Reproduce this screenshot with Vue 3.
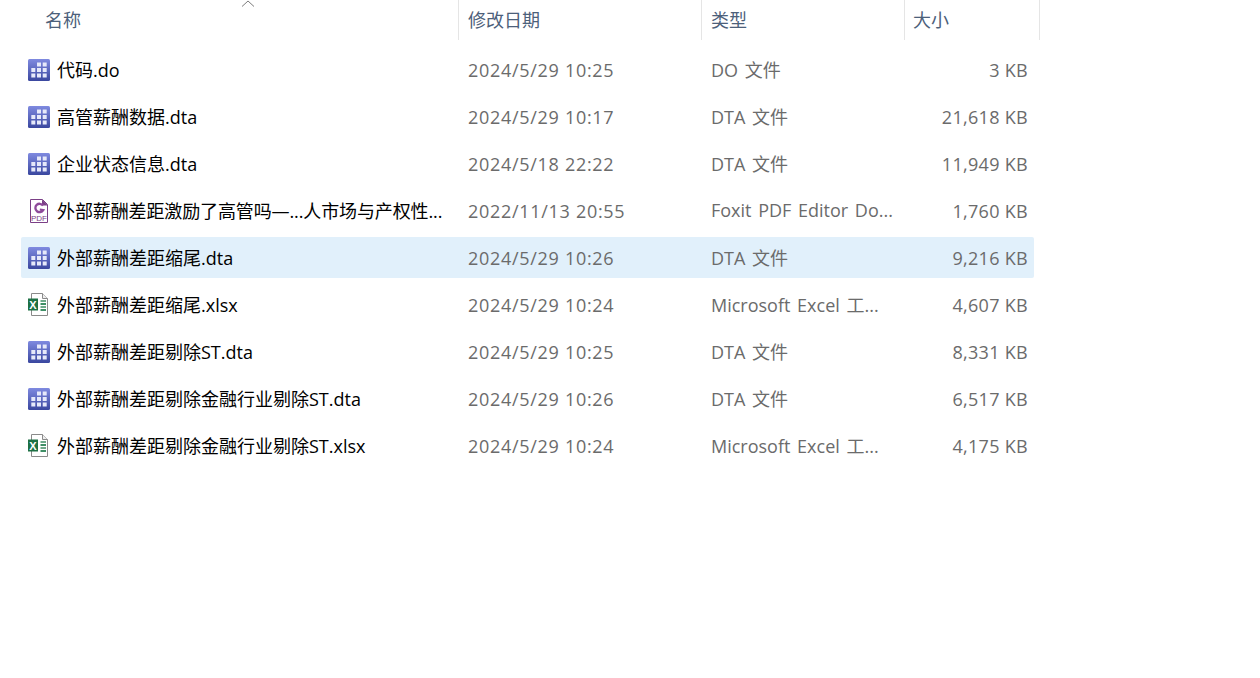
<template>
  <div class="explorer">
    <div class="header">
      <div class="col-head name-head">
        名称
        <svg class="sort" width="14" height="8" viewBox="0 0 14 8"><path d="M1 6.5 7 1l6 5.5" fill="none" stroke="#7d7d7d" stroke-width="1"/></svg>
      </div>
      <div class="col-head date-col">修改日期</div>
      <div class="col-head type-col">类型</div>
      <div class="col-head size-col">大小</div>
    </div>
    <div class="rows">
      <div v-for="f in files" :key="f.name" class="row" :class="{ selected: f.selected }">
        <div class="name-cell">
          <svg v-if="f.icon === 'stata'" class="icon" width="22" height="22" viewBox="0 0 22 22">
            <defs>
              <linearGradient id="stataBg" x1="0" y1="0" x2="0" y2="1">
                <stop offset="0" stop-color="#7f8ae0"/>
                <stop offset="1" stop-color="#3a479f"/>
              </linearGradient>
            </defs>
            <rect width="22" height="22" rx="1.5" fill="url(#stataBg)"/>
            <g fill="#e6e9fa">
              <rect x="9" y="3.5" width="4" height="4"/>
              <rect x="14.7" y="3.5" width="4" height="4"/>
              <rect x="3.3" y="9" width="4" height="4"/>
              <rect x="9" y="9" width="4" height="4"/>
              <rect x="14.7" y="9" width="4" height="4"/>
              <rect x="3.3" y="14.5" width="4" height="4"/>
              <rect x="9" y="14.5" width="4" height="4"/>
              <rect x="14.7" y="14.5" width="4" height="4"/>
            </g>
          </svg>
          <svg v-else-if="f.icon === 'pdf'" class="icon" width="22" height="24" viewBox="0 0 22 24">
            <path d="M2.5.5h12l5 5v18h-17z" fill="#fff" stroke="#7b3f86"/>
            <path d="M14 .5v6h6z" fill="#7b3f86"/>
            <path d="M15 6.5a4.2 4.2 0 1 0 .2 4.6l-3.4-.4" fill="none" stroke="#8e4a9a" stroke-width="2.3"/>
            <text x="11" y="21.5" text-anchor="middle" class="pdf-text">PDF</text>
          </svg>
          <svg v-else class="icon" width="22" height="24" viewBox="0 0 22 24">
            <path d="M3.5.5h11l5 5v17h-16z" fill="#fff" stroke="#8a8a8a"/>
            <path d="M14.5.5v5h5" fill="#eee" stroke="#8a8a8a"/>
            <rect x="12.5" y="7" width="5.5" height="2" fill="#6fa98a"/>
            <rect x="12.5" y="10" width="5.5" height="2" fill="#3f8f66"/>
            <rect x="12.5" y="13" width="5.5" height="2" fill="#6fa98a"/>
            <rect x="12.5" y="16" width="5.5" height="2" fill="#3f8f66"/>
            <rect x="0" y="5.5" width="10" height="12" fill="#1e7145"/>
            <text x="5" y="15.5" text-anchor="middle" class="xl-text">X</text>
          </svg>
          <span class="file-name" :class="{ tight: f.icon === 'pdf' }">{{ f.name }}</span>
        </div>
        <div class="cell date-col">{{ f.date }}</div>
        <div class="cell type-col">{{ f.type }}</div>
        <div class="cell size-col size-val">{{ f.size }}</div>
      </div>
    </div>
  </div>
</template>

<script setup>
const files = [
  { name: '代码.do', date: '2024/5/29 10:25', type: 'DO 文件', size: '3 KB', icon: 'stata' },
  { name: '高管薪酬数据.dta', date: '2024/5/29 10:17', type: 'DTA 文件', size: '21,618 KB', icon: 'stata' },
  { name: '企业状态信息.dta', date: '2024/5/18 22:22', type: 'DTA 文件', size: '11,949 KB', icon: 'stata' },
  { name: '外部薪酬差距激励了高管吗—...人市场与产权性...', date: '2022/11/13 20:55', type: 'Foxit PDF Editor Do...', size: '1,760 KB', icon: 'pdf' },
  { name: '外部薪酬差距缩尾.dta', date: '2024/5/29 10:26', type: 'DTA 文件', size: '9,216 KB', icon: 'stata', selected: true },
  { name: '外部薪酬差距缩尾.xlsx', date: '2024/5/29 10:24', type: 'Microsoft Excel 工...', size: '4,607 KB', icon: 'excel' },
  { name: '外部薪酬差距剔除ST.dta', date: '2024/5/29 10:25', type: 'DTA 文件', size: '8,331 KB', icon: 'stata' },
  { name: '外部薪酬差距剔除金融行业剔除ST.dta', date: '2024/5/29 10:26', type: 'DTA 文件', size: '6,517 KB', icon: 'stata' },
  { name: '外部薪酬差距剔除金融行业剔除ST.xlsx', date: '2024/5/29 10:24', type: 'Microsoft Excel 工...', size: '4,175 KB', icon: 'excel' }
]
</script>

<style>
html, body {
  background: #fff;
}
</style>

<style scoped>
.explorer {
  width: 1260px;
  height: 678px;
  background: #fff;
  overflow: hidden;
  font-family: "Open Sans", "Noto Sans CJK SC", sans-serif;
  font-size: 18px;
}

.header {
  display: flex;
  height: 40px;
  margin-left: 21px;
  width: 1019px;
}

.col-head {
  position: relative;
  height: 40px;
  line-height: 41px;
  color: #4c607a;
  border-right: 1px solid #e5e5e5;
  box-sizing: border-box;
  padding-left: 9px;
}

.name-head {
  width: 438px;
  padding-left: 24px;
  border-right: 1px solid #e5e5e5;
}

.sort {
  position: absolute;
  left: 220px;
  top: 0;
}

.header .date-col { width: 243px; }
.header .type-col { width: 203px; }
.header .size-col { width: 135px; padding-left: 8px; }

.rows {
  margin-left: 21px;
  padding-top: 9px;
  width: 1013px;
}

.row {
  display: flex;
  align-items: center;
  height: 41px;
  margin-bottom: 6px;
  border-radius: 2px;
}

.row.selected {
  background: #e1f0fb;
}

.name-cell {
  display: flex;
  align-items: center;
  width: 438px;
  padding-left: 7px;
  box-sizing: border-box;
}

.icon {
  flex: none;
  width: 22px;
  margin-right: 7px;
}

.file-name {
  color: #000;
  white-space: nowrap;
  padding-bottom: 2px;
}

.file-name.tight {
  letter-spacing: -0.12px;
}

.cell {
  color: #6b6b6b;
  white-space: nowrap;
  padding-left: 9px;
  box-sizing: border-box;
}

.row .date-col {
  width: 243px;
  letter-spacing: 0.7px;
}

.row .type-col {
  width: 203px;
  word-spacing: 2px;
  padding-bottom: 1px;
}

.size-val {
  width: 129px;
  text-align: right;
  padding-right: 6px;
  letter-spacing: 0.3px;
}

.pdf-text {
  font-family: "Liberation Sans", sans-serif;
  font-size: 8px;
  fill: #7b3f86;
}

.xl-text {
  font-family: "Liberation Sans", sans-serif;
  font-size: 11px;
  font-weight: 700;
  fill: #fff;
}
</style>
